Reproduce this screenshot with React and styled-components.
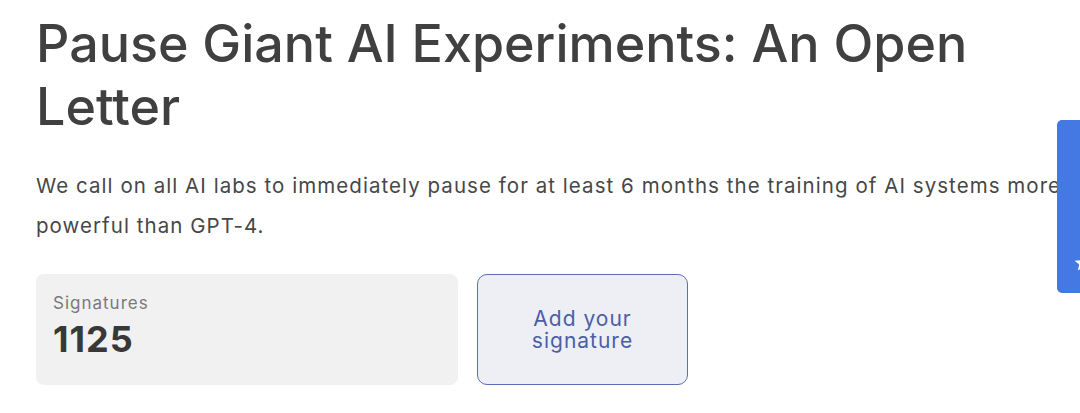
import React from "react";
import styled, { createGlobalStyle } from "styled-components";

const Global = createGlobalStyle`
  html, body { margin: 0; padding: 0; background: #ffffff; overflow: hidden; }
  body { font-family: Inter, "Noto Sans", sans-serif; }
`;

const Page = styled.main`
  padding: 12px 0 0 36px;
  width: 1040px;
`;

const Title = styled.h1`
  margin: 0;
  font-size: 52px;
  line-height: 63px;
  font-weight: 500;
  color: #404040;
  letter-spacing: 0;
  width: 960px;
`;

const Lead = styled.p`
  margin: 28px 0 0;
  font-size: 20.5px;
  line-height: 40px;
  font-weight: 400;
  color: #474747;
  letter-spacing: 1.05px;
  width: 1030px;
`;

const Row = styled.div`
  display: flex;
  gap: 19px;
  margin-top: 28px;
`;

const Stat = styled.div`
  width: 422px;
  height: 111px;
  box-sizing: border-box;
  background: #f1f1f1;
  border-radius: 8px;
  padding: 19px 17px 0;
`;

const StatLabel = styled.div`
  font-size: 17px;
  line-height: 20px;
  color: #7a7a7a;
  letter-spacing: 1px;
`;

const StatValue = styled.div`
  margin-top: 5px;
  font-size: 36px;
  line-height: 43px;
  font-weight: 700;
  color: #383838;
  letter-spacing: 1px;
`;

const SignButton = styled.button`
  width: 211px;
  height: 111px;
  box-sizing: border-box;
  border: 1.5px solid #5a6db5;
  border-radius: 10px;
  background: #eeeff5;
  color: #4b5ea8;
  font-family: inherit;
  font-size: 21px;
  line-height: 22px;
  letter-spacing: 1px;
  padding: 0 20px;
  cursor: pointer;
`;

const SideTab = styled.div`
  position: fixed;
  top: 120px;
  right: -10px;
  width: 33px;
  height: 173px;
  background: #4479e4;
  border-radius: 5px;
  display: flex;
  flex-direction: column;
  align-items: flex-start;
  justify-content: flex-end;
  padding: 0 0 20px 16px;
  box-sizing: border-box;
`;

export default function App() {
  return (
    <>
      <Global />
      <Page>
        <Title>Pause Giant AI Experiments: An Open Letter</Title>
        <Lead>
          We call on all AI labs to immediately pause for at least 6 months the
          training of AI systems more powerful than GPT-4.
        </Lead>
        <Row>
          <Stat>
            <StatLabel>Signatures</StatLabel>
            <StatValue>1125</StatValue>
          </Stat>
          <SignButton>Add your signature</SignButton>
        </Row>
      </Page>
      <SideTab>
        <svg width="20" height="20" viewBox="0 0 24 24" fill="#ffffff">
          <path d="M12 2l2.9 6.6 7.1.6-5.4 4.7 1.6 7-6.2-3.7-6.2 3.7 1.6-7L2 9.2l7.1-.6z" />
        </svg>
      </SideTab>
    </>
  );
}
